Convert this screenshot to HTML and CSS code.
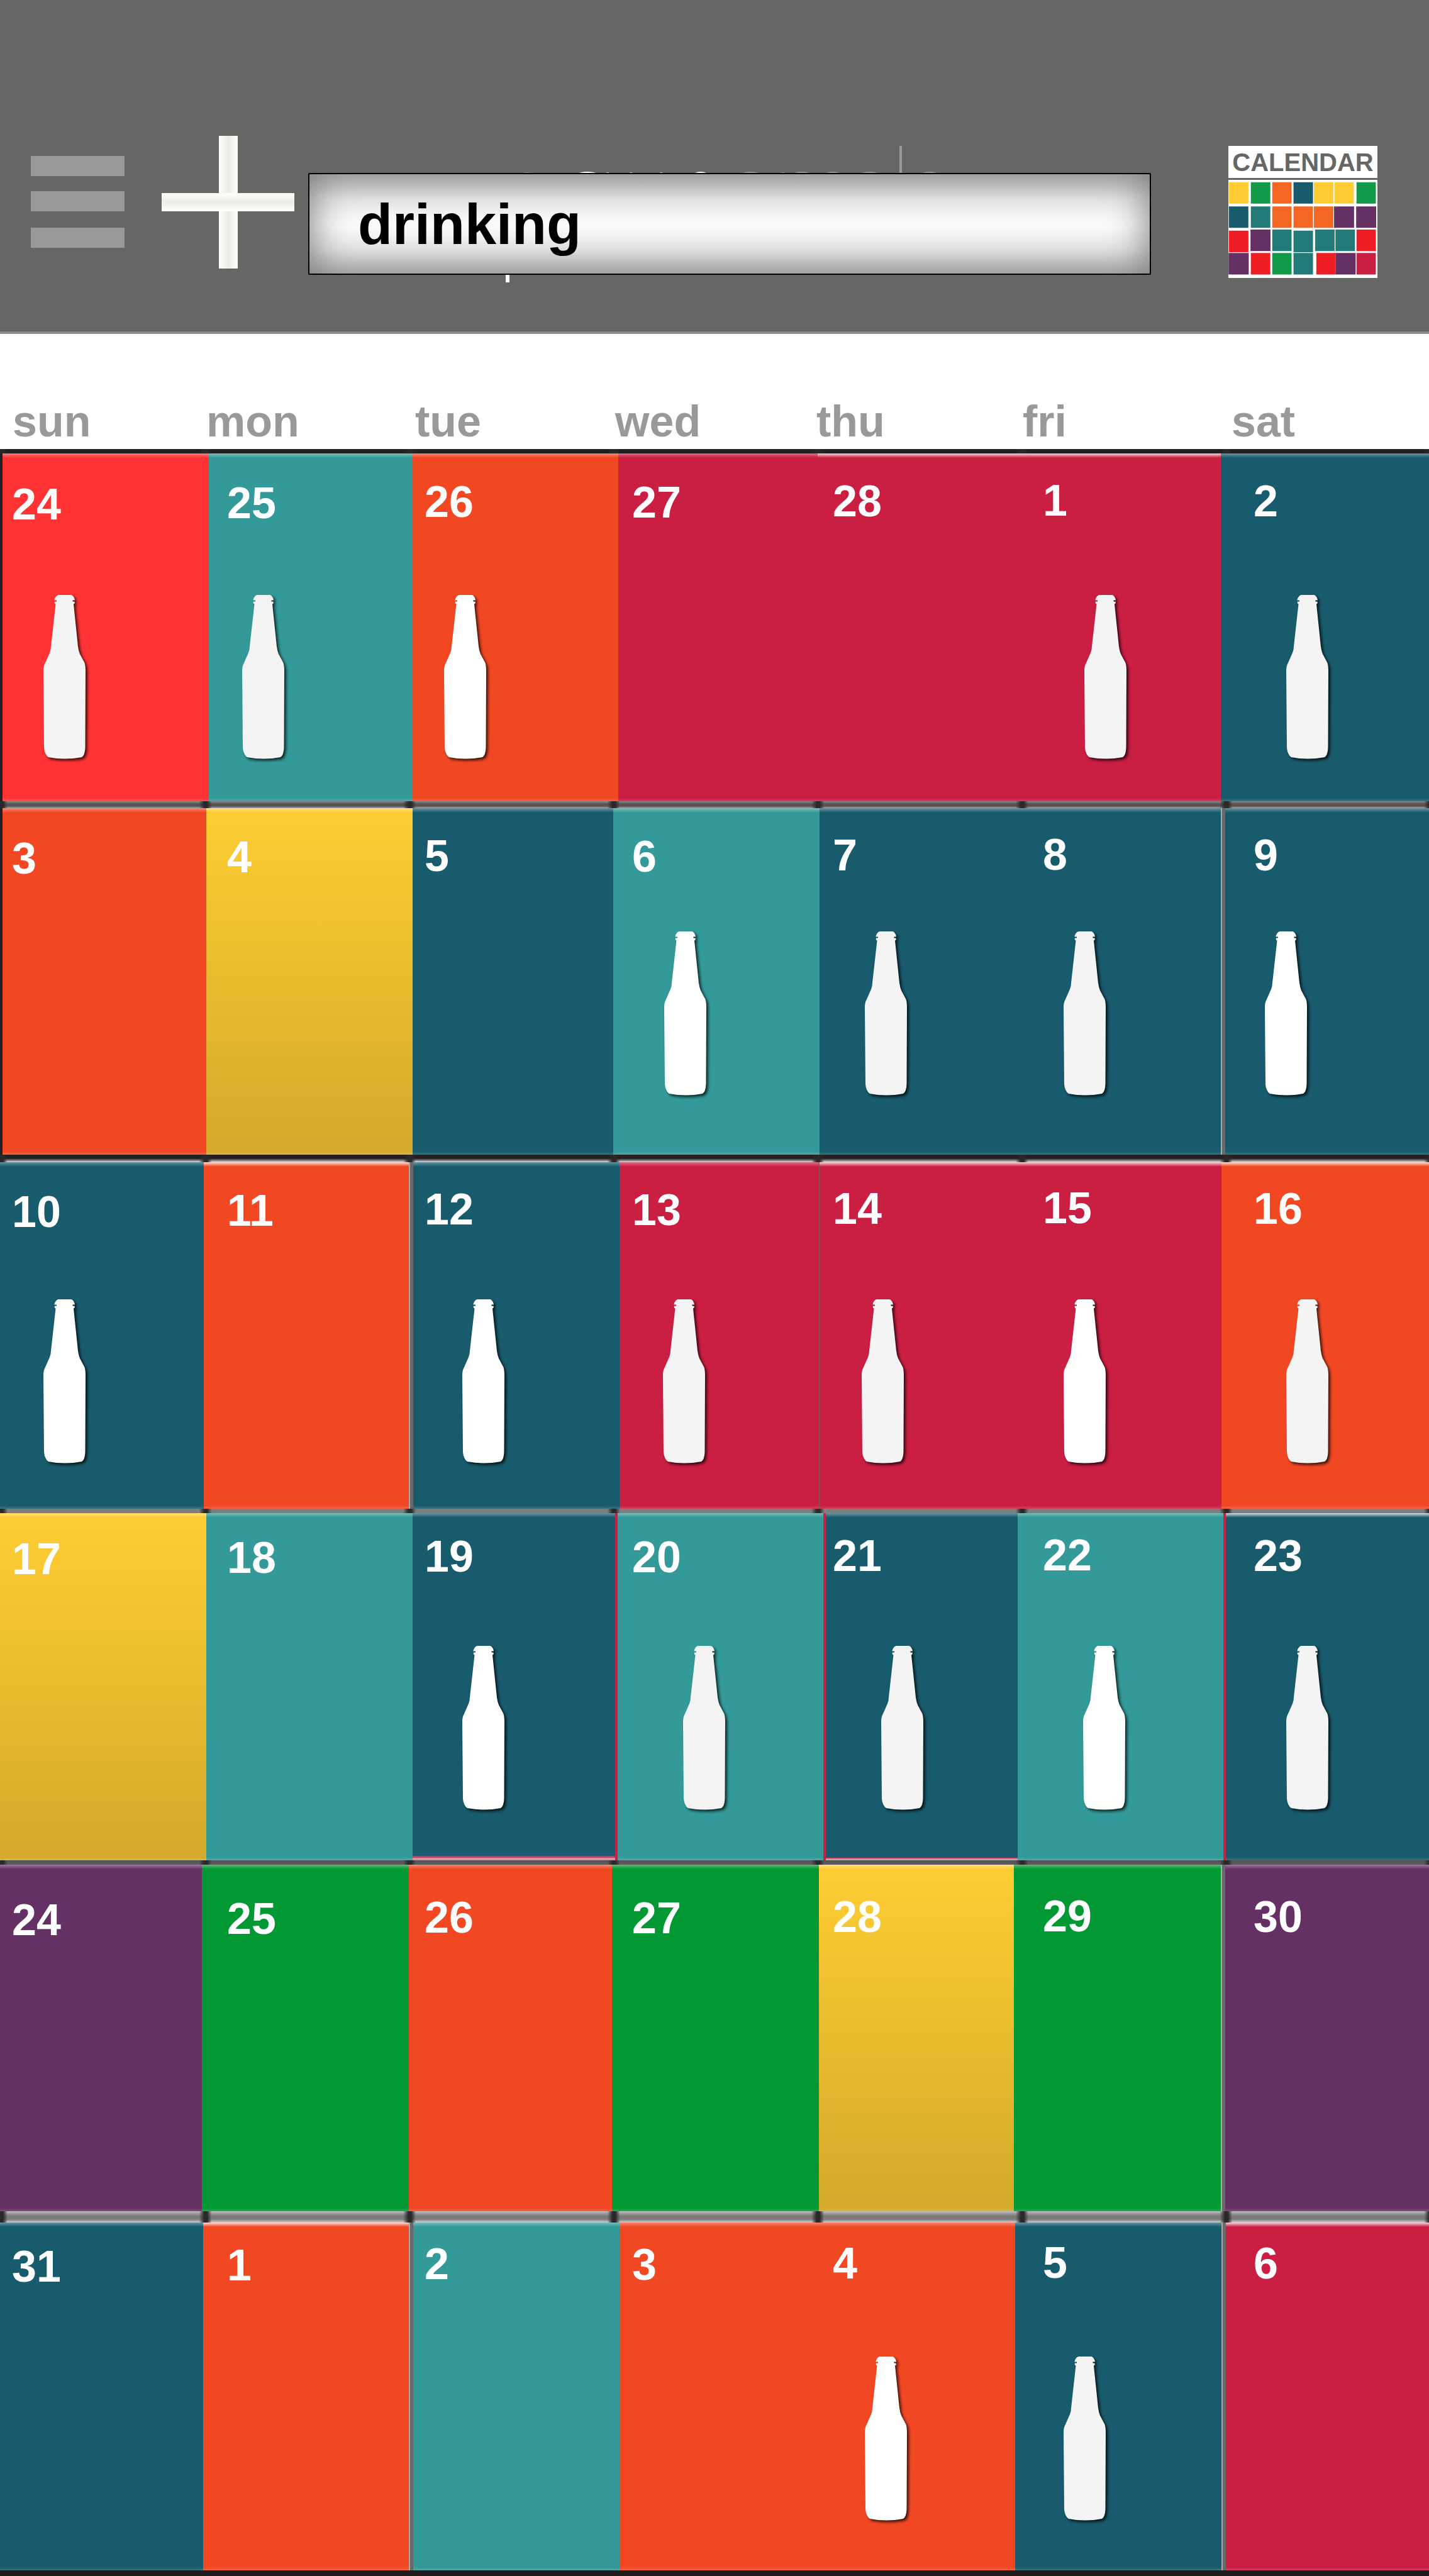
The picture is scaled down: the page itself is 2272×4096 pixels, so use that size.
FILE: index.html
```html
<!DOCTYPE html>
<html lang="en">
<head>
<meta charset="utf-8">
<meta name="viewport" content="width=device-width, initial-scale=1">
<title>Calendar – drinking</title>
<link rel="stylesheet" href="styles.css">
</head>
<body>
<svg class="defs" aria-hidden="true">
  <symbol id="bottle" viewBox="0 0 67 261">
    <path d="M23.500 0H44.500Q49 2 50 8.500H46.500V10.500H49.500Q50.500 14 48 14.500L55 82Q56 89 58 94L65.500 108Q67 113 67 121L66.500 243Q66 255 61 258Q34 263 8 258Q2 254 1 243L0 121Q0 113 2.500 109L10 92Q12 87 12 82L19.500 14.500Q17 14 18 10.500H21V8.500H17.500Q18.500 2 23.500 0Z" fill="currentColor"/>
  </symbol>
</svg>

<header class="topbar">
  <button class="icon-button menu" type="button" aria-label="Menu">
    <svg viewBox="0 0 149 146" width="149" height="146"><path d="M0 0H149V32H0ZM0 56H149V88H0ZM0 114H149V146H0Z" fill="#999"/></svg>
  </button>
  <button class="icon-button add" type="button" aria-label="Add">
    <svg viewBox="0 0 211 211" width="211" height="211">
      <defs>
        <linearGradient id="barV"><stop offset="0" stop-color="#fff"/><stop offset=".5" stop-color="#ebece5"/><stop offset="1" stop-color="#fff"/></linearGradient>
        <linearGradient id="barH" x2="0" y2="1"><stop offset="0" stop-color="#fff"/><stop offset=".5" stop-color="#ebece5"/><stop offset="1" stop-color="#fff"/></linearGradient>
      </defs>
      <rect x="91" width="30" height="211" fill="url(#barV)"/>
      <rect y="91" width="211" height="29" fill="url(#barH)"/>
    </svg>
  </button>
  <div class="search">
    <svg class="search-back" viewBox="0 0 1000 220" width="1000" height="220" aria-hidden="true">
      <g fill="#fff">
        <ellipse cx="444" cy="44" rx="14" ry="3"/><ellipse cx="624" cy="44" rx="9" ry="3"/>
        <path d="M474 42h4v4h-4zM511 42h4v4h-4zM559 42h4v4h-4z" opacity=".6"/>
        <path d="M314 200h6v17h-6z"/>
      </g>
      <g fill="#999">
        <ellipse cx="348" cy="44" rx="5" ry="2"/><ellipse cx="703" cy="44" rx="13" ry="3"/><ellipse cx="785" cy="44" rx="12" ry="3"/>
        <ellipse cx="834" cy="44" rx="11" ry="3"/><ellipse cx="893" cy="44" rx="13" ry="3"/><ellipse cx="988" cy="44" rx="12" ry="3"/>
        <path d="M753 42h4v4h-4zM940 0h4v46h-4z"/>
      </g>
    </svg>
    <input class="search-box" type="text" value="drinking" aria-label="Search">
  </div>
  <a class="logo" href="#">
    <span class="logo-title">CALENDAR</span>
    <svg class="logo-grid" viewBox="396 306 849 558" preserveAspectRatio="none" aria-hidden="true">
      <path fill="#fff" d="M396 306h849v558H396z"/>
      <path fill="#ffcc33" d="M399 319h111v122H399zM883 319h111v122H883zM1000 319h110v122h-110z"/>
      <path fill="#129a49" d="M524 319h111v122H524zM1126 319h110v122h-110zM646 722h110v122H646z"/>
      <path fill="#f36723" d="M646 319h110v122H646zM646 457h110v122H646zM767 457h111v122H767zM883 457h111v122H883z"/>
      <path fill="#185b6d" d="M767 319h111v122H767zM399 457h111v122H399z"/>
      <path fill="#227a79" d="M524 457h111v122H524zM646 589h110v122H646zM767 595h111v122H767zM890 589h111v122H890zM1006 589h111v122h-111zM767 722h111v122H767z"/>
      <path fill="#653165" d="M998 457h114v122H998zM1124 457h114v122h-114zM522 589h114v122H522zM397 722h115v122H397zM1006 722h115v122h-115z"/>
      <path fill="#ef1e25" d="M399 595h111v122H399zM1126 589h110v122h-110zM524 722h111v122H524zM897 722h109v122H897z"/>
      <path fill="#cb1e43" d="M1126 722h110v122h-110z"/>
    </svg>
  </a>
</header>

<main>
<table class="month">
  <thead>
    <tr class="weekdays"><th scope="col">sun</th><th scope="col">mon</th><th scope="col">tue</th><th scope="col">wed</th><th scope="col">thu</th><th scope="col">fri</th><th scope="col">sat</th></tr>
  </thead>
  <tbody>
    <tr class="week week-1">
      <td class="red rule-black"><span class="day">24</span><svg class="bottle soft" style="--at:69"><use href="#bottle"/></svg></td>
      <td class="teal"><span class="day">25</span><svg class="bottle soft" style="--at:385"><use href="#bottle"/></svg></td>
      <td class="orange"><span class="day">26</span><svg class="bottle" style="--at:706"><use href="#bottle"/></svg></td>
      <td class="crimson"><span class="day">27</span></td>
      <td class="crimson bright"><span class="day">28</span></td>
      <td class="crimson bright"><span class="day">1</span><svg class="bottle soft" style="--at:1724"><use href="#bottle"/></svg></td>
      <td class="navy"><span class="day">2</span><svg class="bottle soft" style="--at:2045"><use href="#bottle"/></svg></td>
    </tr>
    <tr class="week week-2">
      <td class="orange rule-black"><span class="day">3</span></td>
      <td class="yellow"><span class="day">4</span></td>
      <td class="navy"><span class="day">5</span></td>
      <td class="teal"><span class="day">6</span><svg class="bottle" style="--at:1056"><use href="#bottle"/></svg></td>
      <td class="navy"><span class="day">7</span><svg class="bottle soft" style="--at:1375"><use href="#bottle"/></svg></td>
      <td class="navy"><span class="day">8</span><svg class="bottle soft" style="--at:1691"><use href="#bottle"/></svg></td>
      <td class="navy rule-grey"><span class="day">9</span><svg class="bottle" style="--at:2011"><use href="#bottle"/></svg></td>
    </tr>
    <tr class="week week-3">
      <td class="navy"><span class="day">10</span><svg class="bottle" style="--at:69"><use href="#bottle"/></svg></td>
      <td class="orange bright"><span class="day">11</span></td>
      <td class="navy rule-grey"><span class="day">12</span><svg class="bottle" style="--at:735"><use href="#bottle"/></svg></td>
      <td class="crimson"><span class="day">13</span><svg class="bottle soft" style="--at:1054"><use href="#bottle"/></svg></td>
      <td class="crimson bright rule-hair"><span class="day">14</span><svg class="bottle soft" style="--at:1370"><use href="#bottle"/></svg></td>
      <td class="crimson bright"><span class="day">15</span><svg class="bottle" style="--at:1691"><use href="#bottle"/></svg></td>
      <td class="orange bright"><span class="day">16</span><svg class="bottle soft" style="--at:2045"><use href="#bottle"/></svg></td>
    </tr>
    <tr class="week week-4">
      <td class="yellow"><span class="day">17</span></td>
      <td class="teal"><span class="day">18</span></td>
      <td class="navy rule-under"><span class="day">19</span><svg class="bottle" style="--at:735"><use href="#bottle"/></svg></td>
      <td class="teal rule-red"><span class="day">20</span><svg class="bottle soft" style="--at:1086"><use href="#bottle"/></svg></td>
      <td class="navy rule-red rule-red-under"><span class="day">21</span><svg class="bottle soft" style="--at:1401"><use href="#bottle"/></svg></td>
      <td class="teal"><span class="day">22</span><svg class="bottle" style="--at:1722"><use href="#bottle"/></svg></td>
      <td class="navy rule-red bright"><span class="day">23</span><svg class="bottle soft" style="--at:2045"><use href="#bottle"/></svg></td>
    </tr>
    <tr class="week week-5">
      <td class="purple"><span class="day">24</span></td>
      <td class="green"><span class="day">25</span></td>
      <td class="orange"><span class="day">26</span></td>
      <td class="green"><span class="day">27</span></td>
      <td class="yellow"><span class="day">28</span></td>
      <td class="green"><span class="day">29</span></td>
      <td class="purple rule-grey"><span class="day">30</span></td>
    </tr>
    <tr class="week week-6">
      <td class="navy"><span class="day">31</span></td>
      <td class="orange bright"><span class="day">1</span></td>
      <td class="teal rule-grey"><span class="day">2</span></td>
      <td class="orange"><span class="day">3</span></td>
      <td class="orange"><span class="day">4</span><svg class="bottle" style="--at:1375"><use href="#bottle"/></svg></td>
      <td class="navy"><span class="day">5</span><svg class="bottle soft" style="--at:1691"><use href="#bottle"/></svg></td>
      <td class="crimson bright rule-grey"><span class="day">6</span></td>
    </tr>
  </tbody>
</table>
</main>
</body>
</html>
```
FILE: styles.css
```css
:root {
  /* one unit of the 2272-unit-wide month sheet */
  --u: calc(100vw / 2272);
}

* { box-sizing: border-box; }

body {
  margin: 0;
  background: #fff;
  font-family: "Liberation Sans", Arial, Helvetica, sans-serif;
  font-weight: bold;
}

.defs { display: none; }

/* ---------- top bar ---------- */

.topbar {
  display: flex;
  align-items: flex-start;
  height: 531px;
  padding: 216px 82px 0 49px;
  background: linear-gradient(#666664, #666664) top / 100% 527px no-repeat, #8b8b89;
}

.icon-button {
  flex: none;
  padding: 0;
  border: 0;
  background: none;
}

.icon-button svg { display: block; }

.menu { margin-top: 32px; }

.add { margin-left: 59px; }

.search {
  position: relative;
  flex: 1;
  margin: 59px 123px 0 22px;
}

.search-back {
  position: absolute;
  top: -43px;
  left: 0;
}

.search-box {
  position: relative;
  display: block;
  width: 100%;
  height: 162px;
  padding: 3px 77px 0;
  border: 2px solid #000;
  border-radius: 2px;
  background:
    linear-gradient(rgba(120, 120, 120, .36), rgba(160, 160, 160, .16) 25%, transparent 48% 54%, rgba(160, 160, 160, .16) 77%, rgba(120, 120, 120, .32)),
    #fafafa;
  box-shadow: inset 0 0 64px 2px #777;
  color: #000;
  font: bold 90px "Liberation Sans", Arial, sans-serif;
}

.logo {
  flex: none;
  width: 237px;
  margin-top: 16px;
  text-decoration: none;
}

.logo-title {
  display: block;
  height: 51px;
  background: #fff;
  color: #666664;
  font-size: 40px;
  line-height: 52px;
  text-align: center;
}

.logo-grid {
  display: block;
  width: 100%;
  height: 156px;
  margin-top: 3px;
}

/* ---------- month ---------- */

.month,
.month thead,
.month tbody {
  display: block;
}

.month tbody { border-bottom: 9px solid #1f1b1c; }

.weekdays,
.week {
  display: grid;
  grid-template-columns:
    calc(var(--e2) * var(--u))
    calc((var(--e3) - var(--e2)) * var(--u))
    calc((var(--e4) - var(--e3)) * var(--u))
    calc((var(--e5) - var(--e4)) * var(--u))
    calc((var(--e6) - var(--e5)) * var(--u))
    calc((var(--e7) - var(--e6)) * var(--u))
    1fr;
}

.weekdays {
  --e2: 328; --e3: 660; --e4: 978; --e5: 1298; --e6: 1626; --e7: 1958;
  height: 183px;
  padding-top: 99px;
}

.weekdays th {
  padding: 0;
  color: #999;
  font-size: 70px;
  line-height: 80px;
  text-align: left;
}

.weekdays th:first-child { padding-left: 20px; }

.week {
  padding-top: var(--gap);
  background:
    repeating-linear-gradient(90deg, #2b2829 0 5px, transparent 12px calc(100% / 7 - 8px), #2b2829 calc(100% / 7)) top / 100% var(--gap) no-repeat,
    var(--band) top / 100% var(--gap) no-repeat;
}

.week-1 {
  --e2: 332; --e3: 656; --e4: 983; --e5: 1300; --e6: 1623; --e7: 1941;
  --gap: 7px; --height: 553px; --day-top: 35px; --bottle-top: 225px;
  --band: linear-gradient(#231f20, #231f20);
}

.week-2 {
  --e2: 328; --e3: 656; --e4: 975; --e5: 1303; --e6: 1623; --e7: 1941;
  --gap: 11px; --height: 551px; --day-top: 34px; --bottle-top: 196px;
  --band: linear-gradient(#8a898a, #555354 40% 70%, #a5a5a5);
}

.week-3 {
  --e2: 324; --e3: 650; --e4: 985; --e5: 1302; --e6: 1623; --e7: 1942;
  --gap: 12px; --height: 551px; --day-top: 33px; --bottle-top: 218px;
  --band: linear-gradient(#231f20 0 50%, #e0e0e0);
}

.week-4 {
  --e2: 328; --e3: 656; --e4: 978; --e5: 1309; --e6: 1618; --e7: 1945;
  --gap: 7px; --height: 552px; --day-top: 27px; --bottle-top: 211px;
  --band: linear-gradient(#7f7d7e, #7f7d7e);
}

.week-5 {
  --e2: 321; --e3: 650; --e4: 973; --e5: 1302; --e6: 1612; --e7: 1941;
  --gap: 7px; --height: 551px; --day-top: 42px; --bottle-top: 211px;
  --band: linear-gradient(#555354, #5f5d5e);
}

.week-6 {
  --e2: 323; --e3: 650; --e4: 985; --e5: 1302; --e6: 1614; --e7: 1942;
  --gap: 18px; --height: 553px; --day-top: 24px; --bottle-top: 213px;
  --band: linear-gradient(#c0c0c0, #7c7a7b 40% 70%, #d0d0d0);
}

.week td {
  --haze: rgba(255, 255, 255, .35);
  display: grid;
  align-items: start;
  justify-items: start;
  height: var(--height);
  padding: 0;
  background:
    linear-gradient(var(--haze), transparent) top / 100% 7px no-repeat,
    linear-gradient(transparent, rgba(255, 255, 255, .15)) bottom / 100% 5px no-repeat,
    var(--fill);
}

/* where each column begins, and where its date is written */
.week td:nth-child(1) { --edge: 0; --x: 19; --drop: 6px; }
.week td:nth-child(2) { --edge: var(--e2); --x: 361; --drop: 4px; }
.week td:nth-child(3) { --edge: var(--e3); --x: 675; --drop: 2px; }
.week td:nth-child(4) { --edge: var(--e4); --x: 1005; --drop: 3px; }
.week td:nth-child(5) { --edge: var(--e5); --x: 1324; --drop: 1px; }
.week td:nth-child(6) { --edge: var(--e6); --x: 1658; --drop: 0px; }
.week td:nth-child(7) { --edge: var(--e7); --x: 1993; --drop: 1px; }

.week td.bright { --haze: rgba(255, 255, 255, .8); }

.day,
.bottle {
  grid-area: 1 / 1;
}

.day {
  margin-top: calc(var(--day-top) + var(--drop));
  margin-left: calc((var(--x) - var(--edge)) * var(--u));
  color: #fff;
  font-size: 70px;
  line-height: 80px;
}

.bottle {
  width: 67px;
  height: 261px;
  margin-top: var(--bottle-top);
  margin-left: calc((var(--at) - var(--edge)) * var(--u));
  overflow: visible;
  color: #fff;
  filter: drop-shadow(3px 3px 2px rgba(0, 0, 0, .75));
}

.soft { color: #f4f4f4; }

.red { --fill: #ff3333; }
.teal { --fill: #339999; }
.orange { --fill: #f14823; }
.crimson { --fill: #cb1e43; }
.navy { --fill: #185b6d; }
.green { --fill: #029833; }
.purple { --fill: #653165; }
.yellow { --fill: linear-gradient(#ffcd33, #d2a92a); }

.rule-black { box-shadow: inset 4px 0 #231f20; }
.rule-grey { box-shadow: inset 2px 0 #aaa8a8, inset 7px 0 #6a6868; }
.rule-hair { box-shadow: inset 1px 0 #7d5a5d; }
.rule-red { box-shadow: inset 4px 0 #cb1e43; }
.rule-under { box-shadow: inset 0 -4px #d9909c, inset 0 -7px #c93c5b; }
.rule-red-under { box-shadow: inset 4px 0 #cb1e43, inset 0 -3px #aaa8a8, inset 0 -5px #cb1e43; }
```
